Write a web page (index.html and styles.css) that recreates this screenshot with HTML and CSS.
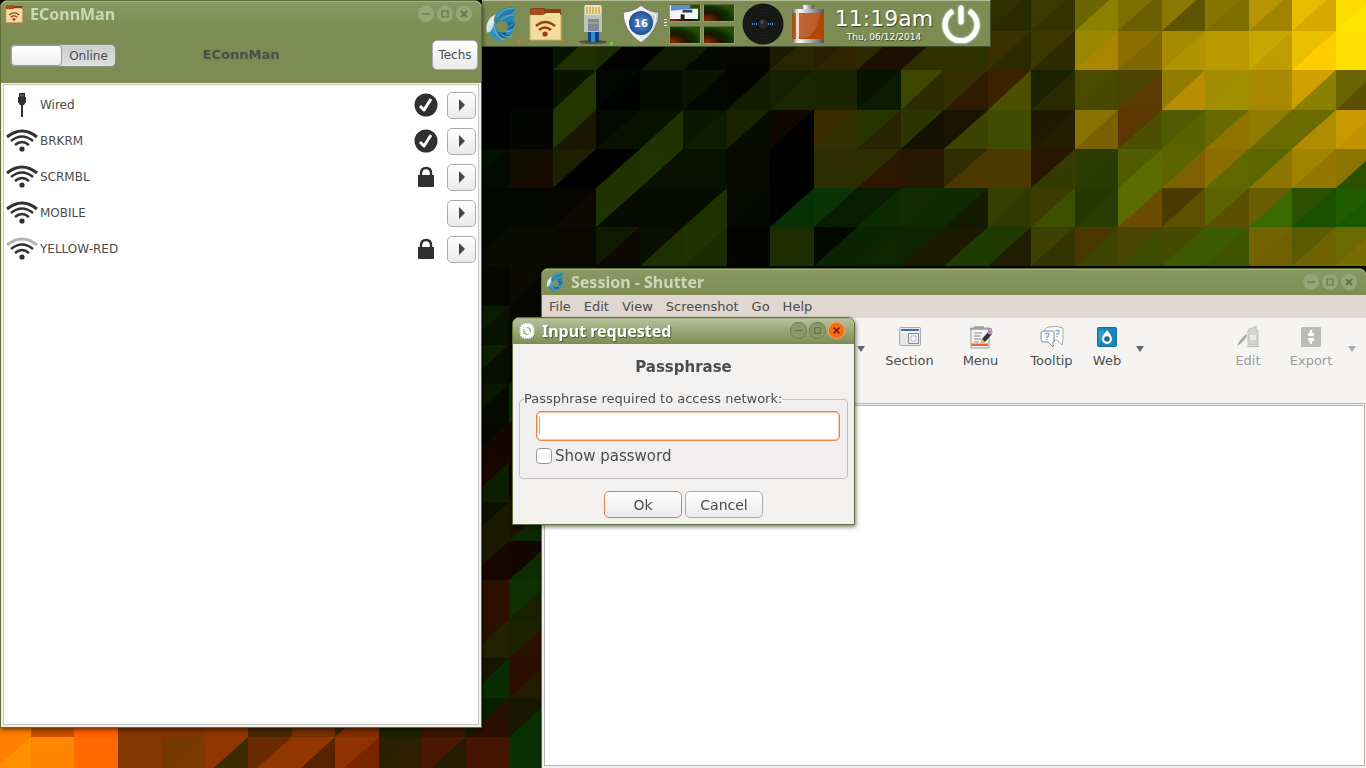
FILE: index.html
```html
<!DOCTYPE html>
<html lang="en">
<head>
<meta charset="utf-8">
<title>Desktop</title>
<link rel="stylesheet" href="styles.css">
</head>
<body>
<svg class="wallpaper" id="wallpaper" viewBox="0 0 1366 768" preserveAspectRatio="xMidYMid slice" aria-hidden="true"></svg>

<svg width="0" height="0" class="defs" aria-hidden="true">
  <defs>
    <linearGradient id="blue" x1="0" y1="0" x2="1" y2="1"><stop offset="0" stop-color="#3b9cc4"/><stop offset="1" stop-color="#075888"/></linearGradient>
    <linearGradient id="metal" x1="0" x2="1" y1="0" y2="0"><stop offset="0" stop-color="#666"/><stop offset=".2" stop-color="#fff"/><stop offset=".6" stop-color="#aaa"/><stop offset="1" stop-color="#555"/></linearGradient>
    <linearGradient id="cell" x1="0" x2="1" y1="0" y2="0"><stop offset="0" stop-color="#a84a12"/><stop offset=".2" stop-color="#c1683b"/><stop offset="1" stop-color="#b85a24"/></linearGradient>
    <radialGradient id="badge"><stop offset="0" stop-color="#5b8fd0"/><stop offset="1" stop-color="#1d4f93"/></radialGradient>
    <linearGradient id="shield" x1="0" x2="1"><stop offset="0" stop-color="#fff"/><stop offset="1" stop-color="#c4c8c8"/></linearGradient>
    <radialGradient id="mini-bg" cx=".1" cy=".9" r="1"><stop offset="0" stop-color="#862800"/><stop offset=".45" stop-color="#1a1400"/><stop offset=".75" stop-color="#0b3000"/><stop offset="1" stop-color="#255000"/></radialGradient>
    <symbol id="swirl" viewBox="0 0 32 36">
      <path d="M11 8Q8 12 9 16L2 27Q-1 14 11 8Z" fill="#dcecf2"/>
      <path d="M9 15Q9 20 12 24Q8 27 2 26Z" fill="#c3dce6"/>
      <path d="M31 1Q17 0 12 7Q8 12 11 19Q14 11 22 9Q29 8 31 1Z" fill="url(#blue)"/>
      <path d="M30 8Q20 7 13 16Q20 13 23 18Q29 16 30 8Z" fill="#2483b4"/>
      <path d="M30 14Q26 17 22 16Q24 20 22 24Q31 24 30 14Z" fill="#10699d"/>
      <path d="M30 22Q26 25 22 22Q21 26 17 27Q25 34 30 22Z" fill="#2a8aba"/>
      <path d="M28 29Q22 31 20 26Q16 28 12 25Q14 36 28 29Z" fill="#0c6297"/>
      <path d="M21 35Q14 33 12 22L9 17Q9 22 4 27Q9 37 21 35Z" fill="#3292bd"/>
      <path d="M30 2Q17 2 12 11M29 9Q21 9 16 14M30 15Q27 20 23 21M29 23Q24 27 20 25M27 30Q19 32 15 27M19 34Q10 31 9 20" fill="none" stroke="#9cd1e2" stroke-width=".6"/>
    </symbol>
    <symbol id="folder" viewBox="0 0 32 34">
      <path d="M1 3Q1 1 3 1H15Q16 1 17 2H32V33H1Z" fill="#8c3c0e"/>
      <path d="M1 8H32V33H1Z" fill="#f3dc9f" stroke="#d1ac67" stroke-width="1"/>
      <path d="M2 2H15V8H2Z" fill="#a94e1c"/>
      <path d="M2 8H14L17 6H31V10H2Z" fill="#f3dc9f"/>
      <g fill="none" stroke="#9c3d11" stroke-width="2.4"><path d="M7 19Q16 11 26 19M10 23Q16 18 22 23"/></g><circle cx="16" cy="27" r="2.6" fill="#9c3d11"/>
    </symbol>
    <symbol id="wifi" viewBox="0 0 32 24">
      <g fill="none" stroke="#2f3030"><path d="M1 8Q16-4 31 8" stroke-width="3"/><path d="M5 12Q16 3 27 12M9 16Q16 10 23 16" stroke-width="2.4"/></g><circle cx="16" cy="20" r="2.6" fill="#2f3030"/>
    </symbol>
    <symbol id="wifi-weak" viewBox="0 0 32 24">
      <g fill="none"><path d="M1 8Q16-4 31 8" stroke="#b5b5b5" stroke-width="3"/><path d="M5 12Q16 3 27 12M9 16Q16 10 23 16" stroke="#2f3030" stroke-width="2.4"/></g><circle cx="16" cy="20" r="2.6" fill="#2f3030"/>
    </symbol>
    <symbol id="plug" viewBox="0 0 32 24"><path d="M13 0H19V4H20V9L18 12H17V24H15V12H14L12 9V4H13Z" fill="#2f3030"/><path d="M14 2H15V3H17V2H18" stroke="#777" fill="none"/></symbol>
    <symbol id="check" viewBox="0 0 24 24"><circle cx="12" cy="12" r="11.5" fill="#2f3030"/><path d="M6 13L10 17L17 6" fill="none" stroke="#fff" stroke-width="3" stroke-linejoin="round"/></symbol>
    <symbol id="lock" viewBox="0 0 24 24"><path d="M4 10H20V21Q20 22 19 22H5Q4 22 4 21Z" fill="#2f3030"/><path d="M7 11V8Q7 3 12 3Q17 3 17 8V11" fill="none" stroke="#2f3030" stroke-width="2.4"/></symbol>
    <symbol id="play" viewBox="0 0 8 12"><path d="M1 0L7 6L1 12Z" fill="#464646"/></symbol>
    <symbol id="down" viewBox="0 0 8 6"><path d="M0 0H8L4 6Z" fill="currentColor"/></symbol>
    <symbol id="w-min" viewBox="0 0 16 16"><path d="M4 8H12" stroke="currentColor" stroke-width="1.2"/></symbol>
    <symbol id="w-max" viewBox="0 0 16 16"><path d="M5 5H11V11H5Z" fill="none" stroke="currentColor" stroke-width="1.2"/></symbol>
    <symbol id="w-close" viewBox="0 0 16 16"><path d="M5 5L11 11M11 5L5 11" stroke="currentColor" stroke-width="1.8"/></symbol>
  </defs>
</svg>

<nav class="shelf" aria-label="Shelf">
  <button class="launcher running" aria-label="Shutter"><svg width="32" height="36"><use href="#swirl"/></svg></button>
  <button class="launcher running" aria-label="EConnMan"><svg width="34" height="34"><use href="#folder"/></svg></button>
  <button class="launcher online" aria-label="Network">
    <svg width="30" height="40" viewBox="0 0 30 40"><ellipse cx="14" cy="38" rx="14" ry="2" fill="#4e5b35"/><path d="M9 28H20V38H9Z" fill="#0c4285"/><path d="M12 28H16V38H12Z" fill="#3589d4"/><path d="M5 2H23V28H5Z" fill="#bfc4b8"/><path d="M6 1H22V11H6Z" fill="#e8e2c8"/><path d="M8 3V10M11 3V10M14 3V10M17 3V10M20 3V10" stroke="#d9a723" stroke-width="1.4"/><path d="M9 15H20V27H9Z" fill="#808994"/><path d="M9 19H20" stroke="#aab0b8"/></svg>
  </button>
  <button class="launcher shield-button" aria-label="Processor frequency">
    <svg width="38" height="40" viewBox="0 0 38 40"><path d="M19 1Q27 8 37 8Q37 27 19 39Q1 27 1 8Q11 8 19 1Z" fill="url(#shield)" stroke="#6d7167"/><path d="M19 4Q26 10 34 11Q33 26 19 36Q5 26 4 11Q12 10 19 4Z" fill="none" stroke="#fff"/><circle cx="19" cy="19" r="12" fill="url(#badge)"/></svg>
    <span class="badge">16</span>
  </button>
  <span class="dots"></span>
  <div class="pager">
    <button class="desk current" aria-label="Desktop 1"><svg viewBox="0 0 31 17" preserveAspectRatio="none"><rect width="31" height="17" fill="url(#mini-bg)"/><path d="M0 0H11L14 4H29V15H15V10H11V15H0Z" fill="#f2f5f8"/><path d="M1 0H21V4L1 6Z" fill="#5a8fc4"/><path d="M13 5H23V8H13Z" fill="#2c3f5c"/></svg></button>
    <button class="desk" aria-label="Desktop 2"><svg viewBox="0 0 31 17" preserveAspectRatio="none"><rect width="31" height="17" fill="url(#mini-bg)"/></svg></button>
    <button class="desk" aria-label="Desktop 3"><svg viewBox="0 0 31 17" preserveAspectRatio="none"><rect width="31" height="17" fill="url(#mini-bg)"/></svg></button>
    <button class="desk" aria-label="Desktop 4"><svg viewBox="0 0 31 17" preserveAspectRatio="none"><rect width="31" height="17" fill="url(#mini-bg)"/></svg></button>
  </div>
  <button class="launcher mixer" aria-label="Mixer">
    <svg width="42" height="42" viewBox="0 0 42 42"><circle cx="21" cy="21" r="20.5" fill="#151515"/><g fill="none" stroke="#202020"><circle cx="21" cy="21" r="18"/><circle cx="21" cy="21" r="15"/><circle cx="21" cy="21" r="12"/><circle cx="21" cy="21" r="9"/></g><circle cx="21" cy="21" r="5" fill="#262626"/><circle cx="20" cy="19" r="2" fill="#444"/><path d="M10 21H16M26 21H32" stroke="#2492f0" stroke-width="2" stroke-dasharray="1 1"/></svg>
  </button>
  <button class="launcher battery" aria-label="Battery">
    <svg width="34" height="40" viewBox="0 0 34 40"><path d="M11 1H23V5H11Z" fill="url(#metal)"/><path d="M1 5H33V10H1ZM1 34H33V39H1Z" fill="url(#metal)"/><path d="M1 9H33V35H1Z" fill="#b34704"/><path d="M1 9H29V33Q15 33 1 35Z" fill="url(#cell)"/><path d="M29 9H33V35H14Q27 28 29 9Z" fill="#b34704"/><path d="M5 7H8V37H5Z" fill="#f2d9cc"/></svg>
  </button>
  <div class="clock"><time class="clock-time">11:19am</time><span class="clock-date">Thu, 06/12/2014</span></div>
  <button class="launcher power" aria-label="Power"><svg width="38" height="38" viewBox="0 0 38 38"><path d="M11 6A16 16 0 1 0 27 6" fill="none" stroke="#fff" stroke-width="5"/><path d="M19 3V17" stroke="#fff" stroke-width="5" stroke-linecap="round"/></svg></button>
</nav>

<section class="window econnman" aria-label="EConnMan">
  <header class="titlebar">
    <svg class="app-icon" width="18" height="18"><use href="#folder"/></svg>
    <h1 class="title">EConnMan</h1>
    <div class="controls"><button aria-label="Minimize"><svg><use href="#w-min"/></svg></button><button aria-label="Maximize"><svg><use href="#w-max"/></svg></button><button aria-label="Close"><svg><use href="#w-close"/></svg></button></div>
  </header>
  <div class="toolbar-head">
    <button class="toggle" role="switch" aria-checked="true"><span class="knob"></span><span class="toggle-label">Online</span></button>
    <h2 class="head-title">EConnMan</h2>
    <button class="button techs">Techs</button>
  </div>
  <ul class="networks">
    <li class="network"><svg class="signal"><use href="#plug"/></svg><span class="name">Wired</span><svg class="state"><use href="#check"/></svg><button class="button more" aria-label="Wired details"><svg><use href="#play"/></svg></button></li>
    <li class="network"><svg class="signal"><use href="#wifi"/></svg><span class="name">BRKRM</span><svg class="state"><use href="#check"/></svg><button class="button more" aria-label="BRKRM details"><svg><use href="#play"/></svg></button></li>
    <li class="network"><svg class="signal"><use href="#wifi"/></svg><span class="name">SCRMBL</span><svg class="state"><use href="#lock"/></svg><button class="button more" aria-label="SCRMBL details"><svg><use href="#play"/></svg></button></li>
    <li class="network"><svg class="signal"><use href="#wifi"/></svg><span class="name">MOBILE</span><button class="button more" aria-label="MOBILE details"><svg><use href="#play"/></svg></button></li>
    <li class="network"><svg class="signal"><use href="#wifi-weak"/></svg><span class="name">YELLOW-RED</span><svg class="state"><use href="#lock"/></svg><button class="button more" aria-label="YELLOW-RED details"><svg><use href="#play"/></svg></button></li>
  </ul>
</section>

<section class="window shutter" aria-label="Session - Shutter">
  <header class="titlebar">
    <svg class="app-icon" width="18" height="20"><use href="#swirl"/></svg>
    <h1 class="title">Session - Shutter</h1>
    <div class="controls"><button aria-label="Minimize"><svg><use href="#w-min"/></svg></button><button aria-label="Maximize"><svg><use href="#w-max"/></svg></button><button aria-label="Close"><svg><use href="#w-close"/></svg></button></div>
  </header>
  <nav class="menubar"><button>File</button><button>Edit</button><button>View</button><button>Screenshot</button><button>Go</button><button>Help</button></nav>
  <div class="tools">
    <button class="arrow" aria-label="Window options"><svg><use href="#down"/></svg></button>
    <button class="tool"><svg viewBox="0 0 24 24"><rect x="1.500" y="2.500" width="21" height="18" rx="1" fill="#e6e6e6" stroke="#aaa"/><path d="M3 5H21" stroke="#486fa8" stroke-width="2"/><path d="M3 7H21" stroke="#fff"/><path d="M10.500 8.500H20.500V18.500H10.500Z" fill="#eee" stroke="#888"/><path d="M13 11H18V16H13Z" fill="#fff" stroke="#a9bdd8"/></svg>Section</button>
    <button class="tool"><svg viewBox="0 0 24 24"><path d="M2 3H20V23H2Z" fill="#f4f4f4" stroke="#999"/><path d="M1 4H23M5 2H15" stroke="#777"/><path d="M5 8H13M5 11H12M5 14H12M5 17H10" stroke="#888"/><path d="M2.500 18.500H19V21H2.500Z" fill="#ec6337"/><path d="M12 18L13 14L20 6L23 9L16 17Z" fill="#333"/><path d="M12 18L13 14L16 17Z" fill="#e8d43a"/><circle cx="21" cy="7" r="2.500" fill="#c58ac0"/></svg>Menu</button>
    <button class="tool"><svg viewBox="0 0 24 24"><path d="M9 2Q16 0 23 3V15L22 20L17 15H9Q4 15 4 8Q4 3 9 2Z" fill="#fafafa" stroke="#aaa"/><path d="M3 6H13Q14 6 14 8V17H13V22L8 17H3Q1 17 1 14V9Q1 6 3 6Z" fill="#fff" stroke="#888"/><path d="M5.500 9Q9 7 9 10Q9 11 7 12V13M7 14V15M15.500 6Q19 4 19 7Q19 8 17 9V10M17 11V12" fill="none" stroke="#8aaed8" stroke-width="1.500"/></svg>Tooltip</button>
    <button class="tool web"><svg viewBox="0 0 24 24"><rect x="2.500" y="2.500" width="19" height="19" rx="1" fill="#1b84b8" stroke="#176c98"/><path d="M3 7Q8 2 10 8T4 18Z" fill="#3299c7"/><path d="M12 5Q17 11 17 14A5 5 0 0 1 7 14Q7 11 12 5Z" fill="#fff"/><circle cx="12" cy="14" r="2.800" fill="#176994"/></svg>Web</button>
    <button class="arrow" aria-label="Web options"><svg><use href="#down"/></svg></button>
    <span class="spring"></span>
    <button class="tool edit" disabled><svg viewBox="0 0 24 24"><path d="M1 21Q3 15 10 9L11 11Q8 17 1 21Z" fill="#a9a9a7"/><path d="M12 6Q12 3 17 3L20 1V4L22 6V20H12Z" fill="#d2d2cf" stroke="#c2c2bf"/><path d="M14 10H20V15H14Z" fill="#ececea"/><path d="M11 21.500H23" stroke="#bbb"/></svg>Edit</button>
    <button class="tool export" disabled><svg viewBox="0 0 24 24"><rect x="2" y="2" width="20" height="20" rx="1" fill="#bcbcba"/><path d="M12 5V10M12 14V19" stroke="#fff" stroke-width="2"/><path d="M9 9L11 7H13L15 9V11H9ZM9 13H15V15L13 17H11L9 15Z" fill="#fff"/></svg>Export</button>
    <button class="arrow" disabled aria-label="Export options"><svg><use href="#down"/></svg></button>
  </div>
  <div class="canvas"></div>
</section>

<form class="window dialog" aria-label="Input requested">
  <header class="titlebar">
    <svg class="app-icon" width="16" height="18" viewBox="0 0 16 18"><rect x="1.500" y="2" width="13" height="14" rx="5" fill="#fff" stroke="#fff" stroke-width="2" stroke-dasharray="1 1"/><circle cx="8" cy="9" r="4" fill="#a9b48b"/><path d="M5 6Q9 4 10 8L12 12Q8 13 6 10Z" fill="#fff"/></svg>
    <h1 class="title">Input requested</h1>
    <div class="controls"><button type="button" aria-label="Minimize"><svg><use href="#w-min"/></svg></button><button type="button" aria-label="Maximize"><svg><use href="#w-max"/></svg></button><button type="button" class="close" aria-label="Close"><svg><use href="#w-close"/></svg></button></div>
  </header>
  <div class="dialog-body">
    <h2 class="dialog-title">Passphrase</h2>
    <fieldset class="frame">
      <legend><label for="pass">Passphrase required to access network:</label></legend>
      <div class="entry"><input type="password" id="pass"><span class="caret"></span></div>
      <div class="check-row"><input type="checkbox" id="show"><label for="show">Show password</label></div>
    </fieldset>
    <div class="actions"><button type="button" class="button default">Ok</button><button type="button" class="button">Cancel</button></div>
  </div>
</form>
<script src="wallpaper.js"></script>
</body>
</html>
```
FILE: wallpaper.js
```js
// Each row: top row index, first column, then "upper-left/lower-right" colours per cell.
const rows = [
  [0, 11, "2f3000/2a2c00 3c3a00/353400 6a6600/8a8200 7d6f00/6a5e00 8a7800/5d5300 887500/7e6f00 b89500/a08400 e8bc00/d8a800 ffdc00/ffe400"],
  [1, -1, "000000 010200 0a1400/1f2f00 1a2c00/020300 000000/0f1c00 101a00/050800 050600 1c1a00/2a2600 2c1c00/302400 2e2a00/1e1000 1c1000/2e3000 2e3000 3a3000/2e2a00 3c3800/2f2a00 9a8700/a98500 8b6d00/7e6600 a58a00/b09300 b89a00 c8a800/c09c00 e8c000/ffcc00 ffe000"],
  [2, -1, "000000 010200 0c1400/233800 000800/000200 060c00 0c1200/040600 040500/141c00 162000/1a2600 1a2400 081400/0a1c00 3e4600/2c2c00 343000/2f1c00 3a2200/4a5000 1a2200/2a2c00 4a4a00/464a00 4a4400/5a3a00 907c00/b88e00 a08c00/a09000 a88800 d0a000/8a8000 6a6400/5a5000"],
  [3, -1, "000000 020500/040400 223600/1a1800 050a00/081000 081000/203200 0a1800/0d1e00 182400/080c00 100800/000000 3a2c00/2f3200 283400/242400 2c3400/151000 181400/3a4400 404c00 1c1a00/241c00 8a7200/7a6000 5a3600/4a5000 505c00/586400 6a6800/907400 907c00/6a6c00 6a6c00/b08c00 c89a00/c09400"],
  [4, -1, "021000/040a00 120c00/180c00 1c2000/000000 000000/1f3200 203400/0a1000 081000 080a00 000000 2c2e00 2c2e00/2c1600 281600/241800 302c00/4a3800 4a3a00 2a1600/323c00 2a3c00/283a00 505c00/5a6c00 5c6400/7e6200 8a6e00/606800 5c6600/8c7600 a08400/947600 8c7400/2c5000"],
  [5, -1, "000800/020a00 020800/050800 060600/0c0a00 203200/060a00 070c00 070c00/1e3200 060a00/050800 000000/063006 0a3406/081c00 081c00/0c2c00 102c00/0e2a00 0e2a00/141a00 343e00/303a00 3a3c00/3e5000 243800/283c00 5a6c00/6a4c00 4a3a00/5e5000 5a6400/5c5000 6a5c00/3a6a00 2a5000/185000 205c00/185800"],
  [6, -1, "040800/0a0c00 0a0c00 080800 101800/0c0a00 0a0e00/1e3000 203200/1c2c00 040400 1e2c00/1e2e00 050800/0a2400 0a2400/0e2600 0e2400/1a1a00 1a1a00/1c3c00 1e3a00/201c00 3c4000/343400 4a3800/3e4400 4a4400/3c4c00 464a00/3e5a00 3c5a00/405400 726400/706000 5c5a00/706400 6a6a00/786c00"],
  [7, -1, "060800/040600 0a0a00/050600 0a0a00"],
  [8, -1, "0a1c00/081400 080800/0a1000 0a1000"],
  [9, -1, "0c2000/080e00 060800/0a2800 0a2000"],
  [10, -1, "0a1800/060a00 0c2800/0a1400 0a1400"],
  [11, -1, "060800/160600 180600/100800 100800"],
  [12, -1, "180600/0c2000 120800/0c2400 0a2000"],
  [13, -1, "0c1000/1a1a00 1a1200/0c2800 0c2800"],
  [14, -1, "1a1a00/1a0600 140600/0f2c00 0f2c00"],
  [15, -1, "2c1000 0f3000/182000 182000"],
  [16, -1, "2a1000/202200 1c2200/2c1000 2c1000"],
  [17, -1, "141600/0a2c00 2c0e00/241a00 241a00"],
  [18, -12, "ff7c00 c85000 ff6000 843400 843400 903400 4c2800 743000 3c2200/803000 1a2000 3a1400 082200/2a1000 161800/0a3000 0a3000"],
  [19, -12, "ff8000/ff9000 ff8400 ff6a00 843800 743800/7c3a00 903600/3c2a00 6a2a00/903800 943600/582400 903200/7a2400 2a2000/302000 4a1800/241a00 441400 0a3000 0a3000"]
];
// Cell edges snap to whole pixels so that neighbours meet without a seam.
const edgeX = col => Math.round(509 + col * 43.5);
const edgeY = row => Math.round(-8 + row * 39.2);
let shapes = "";
for (const [row, first, list] of rows) {
  list.split(" ").forEach((pair, i) => {
    const [a, b = a] = pair.split("/");
    const x = edgeX(first + i), x2 = edgeX(first + i + 1);
    const y = edgeY(row), y2 = edgeY(row + 1);
    shapes += `<path fill="#${a}" d="M${x} ${y}H${x2}V${y2}H${x}z"/>`;
    if (b !== a) shapes += `<path fill="#${b}" d="M${x2} ${y}V${y2}H${x}z"/>`;
  });
}
document.getElementById("wallpaper").innerHTML = shapes;
```
FILE: styles.css
```css
* { box-sizing: border-box; }
body { margin: 0; height: 100vh; overflow: hidden; background: #050800; color: #4c4c4c; font-family: "DejaVu Sans", sans-serif; font-size: 13px; }
button, input { font: inherit; color: inherit; margin: 0; }
button { padding: 0; border: 0; background: none; }
h1, h2 { margin: 0; }
svg { display: block; }
.defs { position: absolute; }
.wallpaper { position: fixed; inset: 0; width: 100%; height: 100%; }

/* Shelf */
.shelf { position: absolute; left: 482px; top: 0; display: flex; align-items: center; height: 47px; padding: 0 10px 0 3px; background: #7d8c53; border-top: 1px solid #b4bd98; border-bottom: 1px solid #434f28; border-right: 1px solid #434f28; }
.launcher { position: relative; display: grid; place-items: center; width: 32px; margin-right: 11px; }
.running::after, .online::after { content: ""; position: absolute; right: -4px; bottom: -1px; width: 3px; height: 3px; border-radius: 2px; background: #f26a16; }
.online { margin: 0 15px 0 8px; width: 30px; }
.online::after { background: #48f01c; right: -4px; }
.shield-button { width: 38px; margin: 0 4px 0 -2px; }
.badge { position: absolute; color: #fff; font-size: 10px; font-weight: bold; line-height: 12px; }
.dots { width: 3px; height: 9px; margin-right: 2px; background: repeating-linear-gradient(#fff 0 1px, transparent 1px 3px); }
.pager { display: grid; grid-template-columns: 32px 32px; gap: 4px 2px; margin-right: 7px; }
.desk { height: 18px; border: 1px solid #929d73; border-top-color: #5c683c; }
.desk svg { width: 100%; height: 100%; }
.mixer { width: 42px; margin-right: 7px; }
.battery { width: 34px; margin-right: 9px; }
.clock { width: 100px; padding-top: 3px; color: #fff; text-align: center; text-shadow: 1px 1px 1px #3a4424; margin-right: 8px; }
.clock-time { display: block; font-size: 22px; line-height: 24px; }
.clock-date { display: block; font-size: 9px; line-height: 12px; white-space: nowrap; }
.power { width: 38px; margin: 0; filter: drop-shadow(0 0 1px #fff); }

/* Windows */
.window { position: absolute; display: flex; flex-direction: column; border: 1px solid #5d6e37; border-radius: 7px 7px 0 0; background: #f2f1f0; box-shadow: 1px 2px 4px rgba(0, 0, 0, .5); }
.titlebar { display: flex; align-items: center; flex: none; height: 26px; padding: 0 9px 2px 4px; gap: 7px; border-top: 1px solid #a3b07f; border-radius: 6px 6px 0 0; background: linear-gradient(#8a9963, #7d8c53); }
.title { flex: 1; color: #ced6ba; font: bold 16px/22px "Noto Sans", "Open Sans", sans-serif; }
.controls { display: flex; gap: 3px; }
.controls button { width: 16px; height: 16px; border-radius: 8px; background: #98a576; color: #66743f; }
.controls svg { width: 16px; height: 16px; }

.econnman { left: 0; top: 0; width: calc(100vw - 884px); height: calc(100vh - 40px); }
.toolbar-head { display: grid; grid-template-columns: 1fr auto 1fr; align-items: center; height: 56px; padding: 0 3px 0 9px; background: #7d8c53; }
.toggle { display: flex; width: 106px; height: 23px; border: 1px solid #8d8d8a; border-radius: 5px; background: linear-gradient(#ccc, #dfdfdf); }
.knob { width: 51px; height: 21px; border: 1px solid #999; border-radius: 4px; background: linear-gradient(#fff, #eee); }
.toggle-label { flex: 1; font-size: 12px; line-height: 22px; text-align: center; }
.head-title { margin-right: 6px; font-size: 13px; line-height: 16px; }
.button { border: 1px solid #aaa; border-radius: 5px; background: linear-gradient(#fff, #ebe9e9); }
.techs { justify-self: end; width: 46px; height: 30px; font-size: 12px; }
.networks { flex: 1; margin: 1px 2px 2px; padding: 2px 2px; border: 1px solid #c8c4c0; background: #fff; list-style: none; }
.network { display: flex; align-items: center; height: 36px; font-size: 12px; }
.signal { width: 32px; height: 24px; margin-right: 2px; }
.name { flex: 1; }
.state { width: 24px; height: 24px; margin-right: 9px; }
.more { display: grid; place-items: center; width: 29px; height: 27px; }
.more svg { width: 8px; height: 12px; }

.shutter { left: 541px; right: 0; top: 268px; bottom: 0; border-bottom: 0; border-right: 0; }
.menubar { display: flex; flex: none; gap: 13px; height: 23px; padding: 0 7px; background: #dfd7d0; font-size: 13px; }
.tools { display: flex; flex: none; align-items: flex-start; height: 86px; padding: 7px 9px 0 314px; border-bottom: 1px solid #beb5aa; background: #f5f4f2; }
.tool { display: grid; justify-items: center; gap: 4px; width: 71px; line-height: 16px; }
.tool svg { width: 24px; height: 24px; }
.web { width: 40px; }
.edit { width: 66px; }
.export { width: 60px; }
.arrow { width: 10px; height: 48px; color: #666; }
.arrow svg { width: 10px; height: 6px; }
.arrow + .tool { margin-left: 8px; }
.web + .arrow { margin-left: 8px; }
.export + .arrow { margin-left: 6px; }
.spring { flex: 1; }
.tool:disabled { color: #9c9c9c; }
.arrow:disabled { color: #aaa; }
.canvas { flex: 1; margin: 1px 1px 2px 2px; border: 1px solid #beb5aa; background: #fff; }

.dialog { left: 512px; top: 317px; width: 343px; }
.dialog .titlebar { padding-left: 6px; background: linear-gradient(#b6c09a, #7d8c53); }
.dialog .title { color: #fff; text-shadow: 1px 1px 1px #4a5530; }
.dialog .controls button { border: 1px solid #6f7d49; width: 17px; height: 17px; background: #8b996a; }
.dialog .controls { gap: 2px; }
.dialog .controls .close { border-color: #ff9c5c; background: #f66b14; color: #6b2b00; }
.dialog .controls svg { width: 15px; height: 15px; }
.dialog-body { padding: 14px 6px 6px; }
.dialog-title { font-size: 15px; line-height: 18px; text-align: center; }
.frame { margin: 15px 0 0; padding: 4px 7px 13px 16px; border: 1px solid #c2c0bf; border-radius: 4px; background: #f0eeef; min-width: 0; }
.frame legend { margin-left: -12px; padding: 0; line-height: 16px; }
.entry { position: relative; }
.entry input { display: block; width: 100%; height: 30px; padding: 4px; border: 1px solid #f0823e; box-shadow: inset 0 0 0 1px #fbc9a8; border-radius: 5px; background: #fff; outline: 0; }
.caret { position: absolute; left: 3px; top: 6px; width: 1px; height: 17px; background: #aaa; }
.check-row { display: flex; align-items: center; gap: 3px; margin-top: 6px; font-size: 15px; line-height: 18px; }
.check-row input { appearance: none; width: 16px; height: 16px; border: 1px solid #999; border-radius: 4px; background: #fff; }
.actions { display: flex; justify-content: center; gap: 3px; margin-top: 12px; }
.actions .button { width: 78px; height: 27px; font-size: 14px; }
.actions .default { border-color: #dc8250; }
```
